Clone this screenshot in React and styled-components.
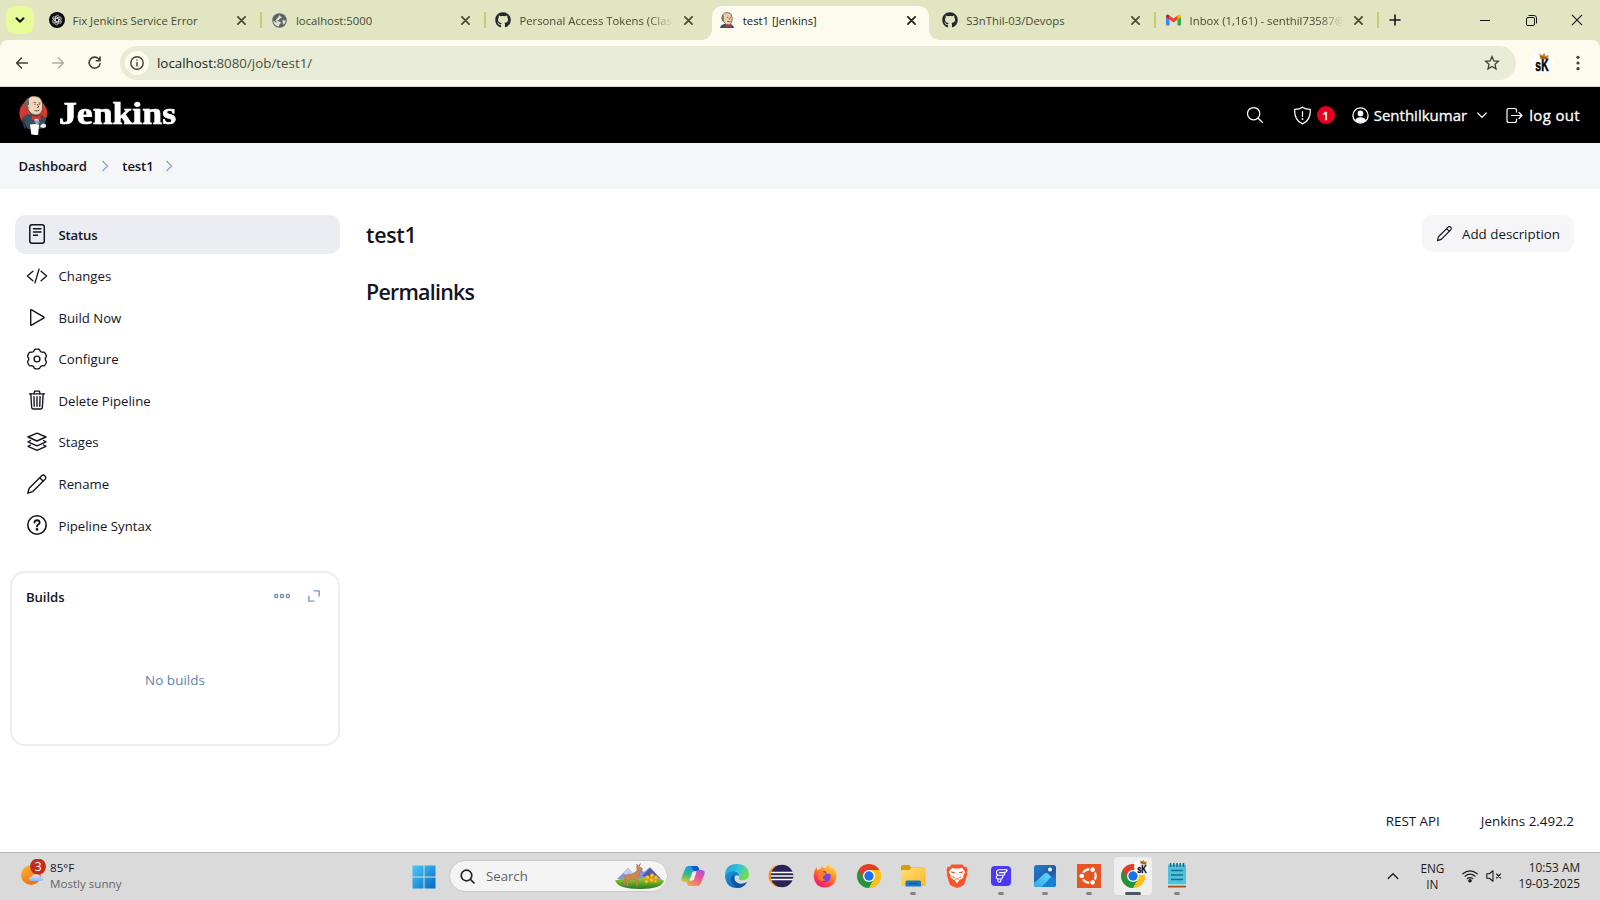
import React from "react";
import styled, { createGlobalStyle, css } from "styled-components";
import { FaGithub } from "react-icons/fa";
import { IoSearchOutline, IoCodeSlashOutline, IoTrashOutline } from "react-icons/io5";

const GlobalStyle = createGlobalStyle`
  *, *::before, *::after { box-sizing: border-box; }
  html, body { margin: 0; padding: 0; }
  body { overflow: hidden; background: #fff; }
  body, button { font-family: "Open Sans", "Noto Sans", sans-serif; }
  button { border: 0; padding: 0; background: none; color: inherit; }
  svg { display: block; flex: none; }
`;

/* ---------- layout ---------- */

const Screen = styled.div`
  width: 1600px;
  height: 900px;
  display: flex;
  flex-direction: column;
  color: #14141f;
  white-space: nowrap;
`;

/* ---------- browser chrome ---------- */

const TabStrip = styled.div`
  height: 40px;
  flex: none;
  display: flex;
  background: #e1e5c1;
  padding-left: 6px;
`;

const TabSearch = styled.button`
  width: 28px;
  height: 28px;
  margin: 6px 4px 0 0;
  border-radius: 9px;
  background: #e9fb99;
  display: grid;
  place-items: center;
`;

const Tab = styled.div`
  position: relative;
  width: 223.4px;
  height: 40px;
  display: flex;
  align-items: center;
  padding: 0 12px 0 10.6px;
  font-size: 11.3px;
  color: #474b33;

  ${(p) =>
    p.$divider &&
    css`
      &::after {
        content: "";
        position: absolute;
        right: -1px;
        top: 12px;
        width: 2px;
        height: 16px;
        background: #c0cf72;
      }
    `}

  ${(p) =>
    p.$active &&
    css`
      color: #1d1e14;
      &::before {
        content: "";
        position: absolute;
        z-index: 0;
        left: 4px;
        right: 3px;
        top: 6px;
        bottom: 0;
        border-radius: 10px 10px 0 0;
        background: #fcfbed;
      }
    `}
`;

const TabFoot = styled.i`
  position: absolute;
  bottom: 0;
  width: 10px;
  height: 10px;
  ${(p) =>
    p.$side === "left"
      ? css`
          left: -6px;
          background: radial-gradient(circle at 0 0, transparent 9.5px, #fcfbed 10px);
        `
      : css`
          right: -7px;
          background: radial-gradient(circle at 100% 0, transparent 9.5px, #fcfbed 10px);
        `}
`;

const TabIcon = styled.span`
  position: relative;
  width: 16px;
  height: 16px;
  margin-right: 8px;
  flex: none;
  display: grid;
  place-items: center;
`;

const TabTitle = styled.span`
  position: relative;
  width: 154px;
  flex: none;
  line-height: 18px;
  padding-top: 1px;
  ${(p) =>
    p.$fade &&
    css`
      -webkit-mask-image: linear-gradient(90deg, #000 84%, transparent);
      mask-image: linear-gradient(90deg, #000 84%, transparent);
    `}
`;

const TabClose = styled.button`
  position: relative;
  width: 16px;
  height: 16px;
  margin-left: 7.5px;
  display: grid;
  place-items: center;
`;

const NewTab = styled.button`
  width: 34px;
  height: 40px;
  display: grid;
  place-items: center;
`;

const WindowControls = styled.div`
  margin-left: auto;
  display: flex;
`;

const WindowButton = styled.button`
  width: 46px;
  height: 40px;
  display: grid;
  place-items: center;
`;

const ToolbarBack = styled.div`
  flex: none;
  background: #e1e5c1;
`;

const Toolbar = styled.div`
  height: 47px;
  display: flex;
  align-items: center;
  padding: 0 12px 1px 12px;
  background: #fcfbed;
  border-bottom: 1px solid #dcdccb;
  border-radius: 8px 8px 0 0;
`;

const NavButton = styled.button`
  width: 20px;
  height: 34px;
  margin-right: 16px;
  display: grid;
  place-items: center;
  color: ${(p) => (p.$disabled ? "#adae9c" : "#3e4130")};
`;

const AddressBar = styled.div`
  width: 1396px;
  height: 34px;
  flex: none;
  display: flex;
  align-items: center;
  padding: 0 16px 0 5px;
  border-radius: 17px;
  background: #e8ebd6;
  color: #3e4130;
`;

const SiteInfo = styled.span`
  width: 24px;
  height: 24px;
  border-radius: 50%;
  display: grid;
  place-items: center;
  background: #fcfbed;
`;

const Url = styled.span`
  flex: 1;
  margin-left: 8px;
  font-size: 13.35px;
  color: #4c4f3d;
  b {
    font-weight: 400;
    color: #1c1d14;
  }
`;

const Profile = styled.span`
  margin: 0 18px 0 15px;
`;

/* ---------- Jenkins page ---------- */

const Header = styled.header`
  height: 56px;
  flex: none;
  display: flex;
  align-items: center;
  padding: 0 20px 0 18px;
  background: #000;
  color: #fff;
`;

const Wordmark = styled.span`
  margin-left: 11px;
  height: 40px;
  line-height: 38px;
  font-family: "Liberation Serif", serif;
  font-weight: 700;
  font-size: 30.5px;
  -webkit-text-stroke: 0.7px #fff;
  transform: scaleX(1.17);
  transform-origin: 0 50%;
`;

const HeaderActions = styled.div`
  margin-left: auto;
  display: flex;
  align-items: center;
  height: 56px;
  font-size: 15px;
  -webkit-text-stroke: 0.3px #fff;
`;

const HeaderItem = styled.span`
  display: flex;
  align-items: center;
  gap: ${(p) => p.$gap || 5}px;
  margin-left: ${(p) => p.$left || 0}px;
  letter-spacing: ${(p) => p.$track || 0}px;
`;

const AlertCount = styled.span`
  width: 18px;
  height: 18px;
  border-radius: 50%;
  display: grid;
  place-items: center;
  background: #e6001f;
  font-size: 11px;
  font-weight: 600;
`;

const Breadcrumbs = styled.nav`
  height: 46px;
  flex: none;
  display: flex;
  align-items: center;
  padding: 0 18.5px;
  background: #f5f6f8;
  font-size: 13.1px;
  font-weight: 600;
  letter-spacing: -0.12px;
`;

const CrumbArrow = styled.span`
  margin: 0 13.5px 0 ${(p) => p.$left || 14}px;
`;

const Page = styled.main`
  height: 663px;
  flex: none;
  display: flex;
  padding: 26px 26px 0 10px;
`;

const Sidebar = styled.aside`
  width: 330px;
  flex: none;
  display: flex;
  flex-direction: column;
`;

const Tasks = styled.div`
  display: flex;
  flex-direction: column;
  gap: 2.6px;
  padding-left: 5px;
`;

const Task = styled.a`
  height: 39px;
  display: flex;
  align-items: center;
  gap: 10.5px;
  padding: 0 11px;
  border-radius: 10px;
  font-size: 13.2px;
  background: ${(p) => (p.$active ? "#ecedf3" : "transparent")};
  font-weight: ${(p) => (p.$active ? 600 : 400)};
  letter-spacing: ${(p) => (p.$active ? "-0.2px" : "0")};
`;

const TaskIcon = styled.span`
  margin-top: -1px;
`;

const BuildsCard = styled.section`
  height: 175px;
  margin-top: 25.8px;
  padding: 14px 18px 0 14px;
  border: 2px solid #ecedf4;
  border-radius: 15px;
`;

const BuildsHeader = styled.div`
  height: 20px;
  display: flex;
  align-items: center;
  font-size: 13.2px;
  font-weight: 600;
  letter-spacing: -0.1px;
  color: #14141f;
`;

const BuildsTools = styled.span`
  margin-left: auto;
  margin-top: -2px;
  display: flex;
  align-items: center;
  gap: 18px;
`;

const NoBuilds = styled.p`
  margin: 63px 0 0 4px;
  text-align: center;
  font-size: 13.5px;
  line-height: 20px;
  color: #6483a8;
`;

const Content = styled.section`
  flex: 1;
  display: flex;
  flex-direction: column;
  padding-left: 26px;
`;

const TitleRow = styled.div`
  display: flex;
  justify-content: space-between;
  height: 38px;
`;

const Heading = styled.h1`
  margin: ${(p) => p.$top || 0}px 0 0;
  font-size: 21.4px;
  line-height: 38px;
  font-weight: 600;
  letter-spacing: ${(p) => p.$track || 0}px;
`;

const DescriptionButton = styled.button`
  width: 152px;
  height: 37px;
  display: flex;
  align-items: center;
  gap: 9px;
  padding-left: 14px;
  border-radius: 10px;
  background: #f6f6f9;
  font-size: 13.35px;
`;

const Footer = styled.footer`
  margin-top: auto;
  display: flex;
  justify-content: flex-end;
  gap: 41px;
  padding-bottom: 21px;
  font-size: 13.4px;
  line-height: 20px;
`;

/* ---------- taskbar ---------- */

const Taskbar = styled.div`
  height: 48px;
  flex: none;
  display: flex;
  background: #dadada;
  border-top: 1px solid #b2b2b2;
  font-size: 11.6px;
`;

const Weather = styled.div`
  width: 392px;
  display: flex;
  padding: 6px 0 0 20px;
`;

const TwoLines = styled.div`
  line-height: 16px;
  padding-top: ${(p) => p.$top || 0}px;
  text-align: ${(p) => p.$align || "left"};
  span {
    display: block;
  }
  span + span {
    color: ${(p) => p.$second || "inherit"};
  }
`;

const Launcher = styled.div`
  display: flex;
  align-items: center;
  width: 785px;
  padding: 0 0 0 20px;
`;

const SearchBox = styled.div`
  width: 219px;
  height: 32px;
  flex: none;
  display: flex;
  align-items: center;
  margin: 0 3px 1px 13px;
  padding: 0 3px 0 10px;
  border-radius: 16px;
  border: 1px solid #c9c9c9;
  background: #f4f4f4;
  font-size: 13.2px;
  color: #606060;
`;

const SearchLabel = styled.span`
  flex: 1;
  margin-left: 11px;
`;

const SearchGlyph = styled.span`
  color: #222;
`;

const AppSlot = styled.span`
  position: relative;
  width: 44px;
  height: 47px;
  flex: none;
  display: grid;
  place-items: center;
  padding-bottom: 2px;

  &::before {
    content: "";
    position: absolute;
    inset: 3px;
    top: 4px;
    bottom: 5px;
    border-radius: 4px;
    background: ${(p) => (p.$active ? "#eeeeee" : "transparent")};
  }
  &::after {
    content: "";
    position: absolute;
    bottom: 5px;
    height: 3px;
    border-radius: 2px;
    width: ${(p) => (p.$active ? 16 : p.$open ? 6 : 0)}px;
    background: ${(p) => (p.$active ? "#4c585e" : "#858585")};
  }
  svg {
    position: relative;
  }
`;

const Tray = styled.div`
  flex: 1;
  display: flex;
  align-items: flex-start;
  justify-content: flex-end;
  padding-right: 20px;
  font-size: 11.8px;
  color: #1a1a1a;
`;

const TrayIcons = styled.span`
  height: 46px;
  display: flex;
  align-items: center;
  gap: 8px;
  margin: 0 ${(p) => p.$right || 16}px 0 18px;
`;

/* ---------- icons ---------- */

const Line = ({ size = 20, box = 24, w = 1.6, children }) => (
  <svg
    width={size}
    height={size}
    viewBox={`0 0 ${box} ${box}`}
    fill="none"
    stroke="currentColor"
    strokeWidth={w}
    strokeLinecap="round"
    strokeLinejoin="round"
  >
    {children}
  </svg>
);

const Cross = ({ size = 9, w = 1.9 }) => (
  <Line size={size} box={10} w={w}>
    <path d="M1 1l8 8M9 1l-8 8" />
  </Line>
);

const OpenAiIcon = () => (
  <svg width="16" height="16" viewBox="0 0 16 16">
    <circle cx="8" cy="8" r="8" fill="#0b0b0b" />
    <g fill="none" stroke="#e8e8e8" strokeWidth=".7">
      {[0, 60, 120, 180, 240, 300].map((a) => (
        <path key={a} transform={`rotate(${a} 8 8)`} d="M6.300 9V5.200a2 2 0 0 1 3.600-1.300M6.300 7l3.100-1.800 2.200 1.300" />
      ))}
    </g>
  </svg>
);

const GlobeIcon = () => (
  <svg width="15" height="15" viewBox="0 0 15 15">
    <circle cx="7.5" cy="7.5" r="7.3" fill="#5e636a" />
    <path
      d="M8.200 1.400c-.3 1.400-.2 2 .8 2.200 1 .2.700 1.500-.4 1.700-1.200.2-1 1.500-2.100 1.700-1.300.2-1.600.8-.4 1.200 1.300.4 2.600.4 2.700 1.500.1 1.300-1.400 1.100-1.500 2.300l-.2 1.600C3.500 13.200 1.300 10.700 1.300 7.500l3.200 2.200c.8-.5-.2-1.500-1-2.300M10.500 7.800c1-.8 2.200-.5 3.200-.4-.1 1.800-.9 3.300-2.100 4.400-.2-1.500-1.700-2.500-1.100-4z"
      fill="#e1e5c1"
    />
  </svg>
);

const GmailIcon = () => (
  <svg width="15" height="12" viewBox="0 0 30 24">
    <path d="M0 3v18q0 2 2 2h5V9z" fill="#4285f4" />
    <path d="M30 3v18q0 2-2 2h-5V9z" fill="#34a853" />
    <path d="M23 4v7l7-5V4q-.5-4-4.500-3z" fill="#fbbc04" />
    <path d="M7 11V3l8 6 8-6v8l-8 6z" fill="#ea4335" />
    <path d="M0 4v2l7 5V3L4 1Q.5 0 0 4z" fill="#c5221f" />
  </svg>
);

const ButlerHead = () => (
  <svg width="16" height="16" viewBox="0 0 16 16">
    <path d="M1 16q.3-3 4-4l6 0q3.500.8 4 4z" fill="#33506a" />
    <path d="M3.500 3Q5 .3 9 .6q4 .6 4.200 5.200.6 5-2.600 7-3 .8-5-1.700Q3 8 3.500 3z" fill="#edcdb0" stroke="#4c4540" strokeWidth=".7" />
    <path d="M4.300 2.300Q1.800 4 2.500 8l2 1.600Q5.500 7 4.300 2.300z" fill="#77706a" />
    <path d="M8 5.300h1.300M11 5.300h1M10 6l.8 1.700M8.300 9.500h3.200" stroke="#4c3c30" strokeWidth=".7" fill="none" />
    <path d="M6.500 12.200l3 1.300 3-1.300v3.300l-3-1-3 1z" fill="#d33833" />
  </svg>
);

const JenkinsLogo = () => (
  <svg width="30" height="42" viewBox="0 0 30 42">
    <circle cx="15.3" cy="19" r="13.9" fill="#d33833" />
    <path d="M0 29h30v13H0z" fill="#000" />
    <path d="M5 23q3-3 7-3l9 1q5 0 7 3.500l-1.500 7.500-4 3-12.500 0q-4-5-5-12z" fill="#334f63" />
    <path d="M5 23.500q3 3 3 11l-1.500 0Q3.500 28 5 23.500z" fill="#263c4d" />
    <path d="M9 7Q11 1.500 17.500 2.200q6.500.8 7 8 .7 7-2.800 9.800-4 2.200-7.900-.2Q7.500 15 9 7z" fill="#f0d6b7" stroke="#3b2f29" strokeWidth=".6" />
    <path d="M10.500 4Q5.500 6 6.500 12.500l3.500 3.500Q12 10 10.500 4z" fill="#6b625c" />
    <path d="M11 11q-1.500-1-1.500 1t2 2" fill="#f0d6b7" stroke="#6a5040" strokeWidth=".5" />
    <path d="M15.500 8.800q1.300-1 2.500 0M20.500 9h2M19.500 10l1.300 3-1.800.6M16.500 16.500q3 1.300 5-.5M16.500 10.500h1M21.300 10.500h.8" fill="none" stroke="#3b2f29" strokeWidth=".8" />
    <path d="M14 22l8 2-3 6.500z" fill="#fff" />
    <path d="M13.500 21l4.500 2 5-2.500v5.800l-5-1.800-4.500 2.200z" fill="#e0362f" stroke="#7d1c1c" strokeWidth=".4" />
    <path d="M16 26.500l4-.5 2 3-4 1z" fill="#8ba5b7" />
    <path d="M12 30.500q5-1 9 0l-.8 10.200q-4 .6-7-.5z" fill="#fff" />
    <path d="M22.500 31l2.500-1.800 3 1v3l-3 1-3-1.200z" fill="#f4f0ee" stroke="#4d4d4d" strokeWidth=".4" />
  </svg>
);

const ShieldIcon = () => (
  <Line size={19} box={20} w={1.3}>
    <path d="M10 1.300C7.600 3 4.500 3.600 1.700 3.600 1.500 10.500 3 15.800 10 18.800c7-3 8.500-8.300 8.300-15.200C15.500 3.600 12.400 3 10 1.300zM10 6v5" />
    <circle cx="10" cy="13.8" r=".4" />
  </Line>
);

const PersonIcon = () => (
  <svg width="17" height="17" viewBox="0 0 17 17">
    <circle cx="8.5" cy="8.5" r="7.6" fill="none" stroke="#fff" strokeWidth="1.3" />
    <circle cx="8.5" cy="6.5" r="2.9" fill="#fff" />
    <path d="M3 13.200Q4.500 10.300 8.500 10.300t5.500 2.900Q12 15.800 8.500 15.800T3 13.200z" fill="#fff" />
  </svg>
);

const LogoutIcon = () => (
  <Line size={17} box={17} w={1.2}>
    <path d="M10.500 5V3.500Q10.500 1.500 8.500 1.500h-5.500Q1 1.500 1 3.500v10q0 2 2 2h5.500q2 0 2-2V12M5.500 8.500H16M13 5.500l3 3-3 3" />
  </Line>
);

const StatusIcon = () => (
  <Line size={22} box={22} w={1.5}>
    <rect x="3.8" y="1.8" width="14.5" height="18.5" rx="2.2" />
    <path d="M7.500 5.800h7.500M7.500 9h7.500M7.500 12.200h4" />
  </Line>
);

const PlayIcon = () => (
  <Line size={22} box={22} w={1.4}>
    <path d="M4.700 4.300v14.400q0 1 .9.500l12-7q.9-.7 0-1.300L5.600 3.800q-.9-.4-.9.500z" />
  </Line>
);

const gear = (() => {
  const points = [];
  for (let i = 0; i <= 120; i += 1) {
    const t = (i / 120) * Math.PI * 2;
    const a = t - Math.PI / 2;
    const r = 9.05 + 0.85 * Math.tanh(2.2 * Math.cos(6 * t) + 0.9);
    points.push(`${(11 + r * Math.cos(a)).toFixed(2)} ${(11 + r * Math.sin(a)).toFixed(2)}`);
  }
  return `M${points.join("L")}Z`;
})();

const GearIcon = () => (
  <Line size={22} box={22} w={1.4}>
    <path d={gear} />
    <circle cx="11" cy="11" r="2.9" />
  </Line>
);

const LayersIcon = () => (
  <Line size={22} box={22} w={1.4}>
    <path d="M11 2.200L2 6l9 4 9-4zM4.500 9.500L2 10.800l9 4 9-4-2.500-1.300M4.500 14L2 15.300l9 4 9-4-2.500-1.300" />
  </Line>
);

const PencilIcon = ({ size = 22, w = 1.4 }) => (
  <Line size={size} box={22} w={w}>
    <path d="M1.800 20.200l1.400-5L16 2.400q1.500-1 3 .5t.4 3L6.800 18.600zM13.800 4.800l3.400 3.400" />
  </Line>
);

const HelpIcon = () => (
  <Line size={22} box={22} w={1.6}>
    <circle cx="11" cy="11" r="9.2" />
    <path d="M8.500 8.500q.3-2.300 2.600-2.300t2.500 2.200q0 1.400-1.400 2.100-1.200.6-1.200 1.900" strokeWidth="1.9" />
    <circle cx="11" cy="15.4" r=".6" fill="currentColor" />
  </Line>
);

const DotsIcon = () => (
  <svg width="16" height="6" viewBox="0 0 16 6" fill="none" stroke="#6483a8" strokeWidth="1.2">
    <circle cx="2.2" cy="3" r="1.6" />
    <circle cx="8" cy="3" r="1.6" />
    <circle cx="13.8" cy="3" r="1.6" />
  </svg>
);

const ExpandIcon = () => (
  <svg width="12" height="12" viewBox="0 0 12 12" fill="none" stroke="#7c97b8" strokeWidth="1.4">
    <path d="M5.500.9h5.600v5.600M.9 5.800v5.300h5.600" />
  </svg>
);

const SkBadge = ({ size = 24 }) => (
  <svg width={size} height={size} viewBox="0 0 24 24" overflow="visible">
    <circle cx="12" cy="12" r="12" fill="#fff" />
    <path d="M9 1.500l3 2L14.500 1l1.500 3 3.500-.5-1.500 5-8-1z" fill="#c98a2c" />
    <path d="M10.500 5l7 2" stroke="#5c3512" strokeWidth="1" />
    <text
      x="12"
      y="21"
      textAnchor="middle"
      fontFamily="Liberation Sans, sans-serif"
      fontWeight="700"
      fontSize="17"
      textLength="14.5"
      lengthAdjust="spacingAndGlyphs"
      fill="#000"
      stroke="#000"
      strokeWidth=".5"
    >
      sK
    </text>
  </svg>
);

const WeatherIcon = () => (
  <svg width="30" height="30" viewBox="0 0 30 30">
    <defs>
      <linearGradient id="sun" x1="0" y1="0" x2=".6" y2="1">
        <stop stopColor="#f7bd31" />
        <stop offset="1" stopColor="#f26a14" />
      </linearGradient>
      <linearGradient id="cloud" x1="0" y1="0" x2="0" y2="1">
        <stop stopColor="#e1edff" />
        <stop offset="1" stopColor="#8fb4ef" />
      </linearGradient>
    </defs>
    <circle cx="11" cy="16" r="10" fill="url(#sun)" />
    <path d="M11 22q-2-.4-2-2.200 0-2 2.500-2 1.500-3 5-2.800 3 .3 3.500 2.800 3 0 3 2.200 0 2-2.500 2z" fill="url(#cloud)" />
    <circle cx="18" cy="7.5" r="8" fill="#c42b1c" />
    <text x="18.3" y="11.5" textAnchor="middle" fontFamily="Open Sans, sans-serif" fontSize="12" fill="#fff">
      3
    </text>
  </svg>
);

const WindowsIcon = () => (
  <svg width="24" height="24" viewBox="0 0 24 24">
    <defs>
      <linearGradient id="win" gradientUnits="userSpaceOnUse" x1="0" y1="0" x2="24" y2="24">
        <stop stopColor="#4fcbfb" />
        <stop offset="1" stopColor="#0067c4" />
      </linearGradient>
    </defs>
    <path d="M.5.500h11v11H.5zM12.500.500h11v11h-11zM.5 12.500h11v11H.5zM12.500 12.500h11v11h-11z" fill="url(#win)" />
  </svg>
);

const MeadowIcon = () => (
  <svg width="49" height="26" viewBox="0 0 49 26" overflow="visible">
    <defs>
      <linearGradient id="hill" x1="0" y1="0" x2="0" y2="1">
        <stop stopColor="#9bd02f" />
        <stop offset="1" stopColor="#257b1d" />
      </linearGradient>
    </defs>
    <path d="M2 16L13 5l5 5 8-4 3 3 6-5 12 13z" fill="#8494d6" />
    <path d="M8 10l5-5 5 5-4 4z" fill="#c3cbee" />
    <path d="M27 13l8-8 10 10z" fill="#4c5cae" />
    <path d="M0 17.500q12-4 24-2 12-2 25 2-2 8.500-24 8.500T0 17.500z" fill="url(#hill)" />
    <path d="M22.500 3l-.8-2M24.300 3l1-2.500" fill="none" stroke="#8a5630" strokeWidth=".9" />
    <path d="M10 12.500q3-1.800 9-1.300l3-4.200-.5-3.500 2-1 1.200 1.200 2.800 1.800-.3 1.200-2.300.5-.7 6-2 2.500.5 7.300h-1.400l-1.100-6.500-5.500-.2L13 23h-1.300l.5-6q-1-.5-1.200-1.500L10 22H8.800l.5-6.500z" fill="#cd8753" stroke="#a8673a" strokeWidth=".4" />
    <g fill="#f7c325" stroke="#d58b16" strokeWidth=".6">
      <circle cx="32.5" cy="14.5" r="2" />
      <circle cx="37" cy="12.5" r="2" />
      <circle cx="36.5" cy="17" r="2.2" />
      <circle cx="41" cy="14.5" r="2" />
      <circle cx="31.5" cy="18.5" r="1.8" />
      <circle cx="40.5" cy="18.3" r="1.5" />
    </g>
  </svg>
);

const CopilotIcon = () => (
  <svg width="24" height="22" viewBox="0 0 24 22">
    <defs>
      <linearGradient id="cpa" x1=".2" y1="0" x2="0" y2="1">
        <stop stopColor="#149ee2" />
        <stop offset=".5" stopColor="#38b982" />
        <stop offset="1" stopColor="#f4c817" />
      </linearGradient>
      <linearGradient id="cpb" x1="1" y1="0" x2=".3" y2="1">
        <stop stopColor="#a44df0" />
        <stop offset=".5" stopColor="#ef5492" />
        <stop offset="1" stopColor="#f6a04c" />
      </linearGradient>
    </defs>
    <path d="M8 1h7q2 0 2.700 2l1 3h-5q-2 0-2.700 2l-2 7Q8 17 6 17H4q-4.500 0-3.500-4L4 4Q5 1 8 1z" fill="url(#cpa)" />
    <path d="M9 1h6q2 0 2.700 2l1 3h-4q-3 0-3-2Q11 1 9 1z" fill="#1656c8" />
    <path d="M16 21H9q-2 0-2.700-2l-1-3h5q2 0 2.700-2l2-7q1-2 3-2h2q4.500 0 3.500 4l-3.500 9q-1 3-4 3z" fill="url(#cpb)" />
    <path d="M11.500 7.500h3.800l-2.800 7.500H8.500z" fill="#eee" />
  </svg>
);

const EdgeIcon = () => (
  <svg width="24" height="24" viewBox="0 0 24 24">
    <defs>
      <linearGradient id="edgeTop" x1="0" y1="0" x2="1" y2=".4">
        <stop stopColor="#209ddc" />
        <stop offset=".55" stopColor="#2fc2df" />
        <stop offset="1" stopColor="#70df4f" />
      </linearGradient>
      <linearGradient id="edgeLow" x1="0" y1="0" x2="1" y2="1">
        <stop stopColor="#1b9bde" />
        <stop offset="1" stopColor="#0c4fa0" />
      </linearGradient>
    </defs>
    <path d="M0 12Q0 0 12 0q11.500.5 12 10 0 6-6 6.300-5 .2-4-3 1.500-4.500-3-6-6-1-11 4.700z" fill="url(#edgeTop)" />
    <path d="M0 12Q3 6.500 9 7q5.500 1 5 5-3-2-4.500 1.500Q9 20 16 20.500q3 .2 6-2.500-3 6-10 6Q1 24 0 12z" fill="url(#edgeLow)" />
    <path d="M8.500 10Q4 15 8 20q3 4 8 3.300 4-1.300 6-5.300-4 2.500-8 1.500-6-2-5.500-9.500z" fill="#10539f" />
  </svg>
);

const EclipseIcon = () => (
  <svg width="26" height="24" viewBox="0 0 26 24">
    <circle cx="11.5" cy="12" r="11" fill="#f7941e" />
    <circle cx="14" cy="12" r="11.3" fill="#2c2255" />
    <path d="M3 8.500h22M2.700 12h22.600M3 15.500h22" stroke="#fff" strokeWidth="1.5" />
  </svg>
);

const FirefoxIcon = () => (
  <svg width="24" height="24" viewBox="0 0 24 24">
    <defs>
      <linearGradient id="ffx" x1=".9" y1="0" x2=".3" y2="1">
        <stop stopColor="#fff04a" />
        <stop offset=".45" stopColor="#ff8a24" />
        <stop offset=".8" stopColor="#ff3650" />
        <stop offset="1" stopColor="#e7158c" />
      </linearGradient>
    </defs>
    <path d="M.7 12.500Q.5 7 3.500 3l.8 3 4-1.500L7.500 2l5 2.800Q13 1.500 16 0l2 4.500 3-1q3.300 5.500 2.300 11Q21.500 23 12 23.500 1.500 23 .7 12.500z" fill="url(#ffx)" />
    <circle cx="12" cy="12.5" r="5.7" fill="#7845dc" />
    <path d="M5 8q4-2 6.500.5l2 1.500-3 2q-2 3 2 4-4 2.500-7-1z" fill="#ff7a2b" />
    <path d="M12 6q4 0 6 4-2-1-4 0z" fill="#ffb52b" />
  </svg>
);

const ChromeIcon = () => (
  <svg width="24" height="24" viewBox="0 0 24 24">
    <circle cx="12" cy="12" r="12" fill="#fbc116" />
    <path d="M12 12L1.610 6A12 12 0 0 0 12 24l5.200-9z" fill="#229342" />
    <path d="M1.610 6A12 12 0 0 1 22.390 6H12l-5.200 9z" fill="#e33b2e" />
    <path d="M12 6h10.400A12 12 0 0 1 12 24l5.200-9z" fill="#fbc116" />
    <circle cx="12" cy="12" r="6" fill="#fff" />
    <circle cx="12" cy="12" r="4.7" fill="#1a73e8" />
  </svg>
);

const FolderIcon = () => (
  <svg width="25" height="24" viewBox="0 0 25 24">
    <defs>
      <linearGradient id="folder" x1="0" y1="0" x2="1" y2="1">
        <stop stopColor="#ffe07a" />
        <stop offset="1" stopColor="#fbb81f" />
      </linearGradient>
    </defs>
    <path d="M0 3q0-2 2-2h6l2.500 2.500H22v5H0z" fill="#d99a08" />
    <path d="M0 7.500q0-1.500 1.500-1.500H8l2.500-2.500H23q1.500 0 1.500 1.500v17H0z" fill="url(#folder)" />
    <path d="M4.500 22.500V18q0-1.500 1.500-1.500h12.500q1.500 0 1.500 1.500v4.500z" fill="#1877c9" />
    <path d="M8 19.500h8.500" stroke="#0d5797" strokeWidth="1.3" />
  </svg>
);

const BraveIcon = () => (
  <svg width="22" height="24" viewBox="0 0 22 24">
    <path d="M5.500.500h11L18.500 3l2-.3L21.500 6l-.7 2 .5 2-2.500 9q-.7 2-2.500 3L11 24l-5.300-2q-1.800-1-2.500-3L.7 10l.5-2L.5 6l1-3.300 2 .3z" fill="#fb542b" />
    <path d="M6 3.800l2.500.7h5L16 3.800l3.200 4.200-2 3.500.3 2-4.200 2.800-2.300 3.200-2.300-3.200-4.200-2.800.3-2L2.800 8z" fill="#fff" />
    <path d="M4.800 7.300l4.400.9-.9 1.300-3-.8zM17.200 7.300l-4.400.9.9 1.300 3-.8zM5.500 11.500l3.500 2-.7.9zM16.500 11.500l-3.500 2 .7.9z" fill="#fb542b" />
    <path d="M9 15.500l2-1.200 2 1.200" fill="none" stroke="#fb542b" strokeWidth=".9" />
  </svg>
);

const FigIcon = () => (
  <svg width="20" height="20" viewBox="0 0 20 20">
    <rect width="20" height="20" rx="4" fill="#4b3af5" />
    <g fill="none" stroke="#fff" strokeWidth="1.1" strokeLinejoin="round">
      <path d="M8 3.800h8q-.3 2.800-3 2.800H8" />
      <path d="M8 3.800Q5.500 4 5.500 6.500T7.500 9.300h5Q14 8.800 14 6.600" />
      <path d="M7.500 9.300q-2.300.2-2.200 2 .2 1.700 2.200 1.700h2.500q2-.5 2-3.700M7 13q-.8 3.200 1.300 3.200 1.700 0 1.700-3.200" />
    </g>
  </svg>
);

const PhotosIcon = () => (
  <svg width="22" height="22" viewBox="0 0 22 22">
    <defs>
      <linearGradient id="photo" x1="0" y1="0" x2="1" y2="1">
        <stop stopColor="#1c7fd2" />
        <stop offset=".6" stopColor="#2758a6" />
        <stop offset="1" stopColor="#2c92df" />
      </linearGradient>
      <linearGradient id="ridge" x1="1" y1="0" x2="0" y2="1">
        <stop stopColor="#63dcf8" />
        <stop offset="1" stopColor="#2ba9e6" />
      </linearGradient>
      <clipPath id="photoClip">
        <rect width="22" height="22" rx="2.5" />
      </clipPath>
    </defs>
    <g clipPath="url(#photoClip)">
      <rect width="22" height="22" fill="url(#photo)" />
      <path d="M12 8.500q1.500-1 3 .5L22 16v6H5z" fill="#1880d6" />
      <path d="M0 18L10.300 8.700q2-1.500 3.700 0L17 12 7.500 22H0z" fill="url(#ridge)" />
    </g>
    <circle cx="16" cy="4.5" r="2" fill="#f3faff" />
  </svg>
);

const UbuntuIcon = () => (
  <svg width="24" height="24" viewBox="0 0 24 24">
    <rect width="24" height="24" fill="#e95420" />
    <circle cx="12" cy="12" r="6.7" fill="none" stroke="#fff" strokeWidth="2.3" />
    {[60, 180, 300].map((a) => (
      <g key={a} transform={`rotate(${a} 12 12)`}>
        <circle cx="19" cy="12" r="3.4" fill="#e95420" />
        <circle cx="19.3" cy="12" r="2.3" fill="#fff" />
      </g>
    ))}
  </svg>
);

const ActiveChrome = styled.span`
  position: relative;
  > svg + svg {
    position: absolute;
    right: -5px;
    top: -5px;
  }
`;

const NotepadIcon = () => (
  <svg width="18" height="25" viewBox="0 0 18 25">
    <path d="M0 21h18v3.500H0z" fill="#a6531c" />
    <path d="M0 21h18v1.500H0z" fill="#fff" />
    <rect y="1.5" width="18" height="20" rx="1" fill="#4cc2dd" />
    <path d="M2.500 0v4M5.800 0v4M9 0v4M12.200 0v4M15.500 0v4" stroke="#12657e" strokeWidth="1.4" />
    <path d="M3 7.500h12M3 12h12M3 16.500h12" stroke="#16718b" strokeWidth="1.5" />
  </svg>
);

const WifiIcon = () => (
  <Line size={16} box={16} w={1.2}>
    <path d="M.8 5.800Q8-.2 15.200 5.800M3 8.200q5-4 10 0M5.300 10.600q2.700-2 5.400 0" />
    <circle cx="8" cy="12.8" r="1.2" fill="currentColor" />
  </Line>
);

const MuteIcon = () => (
  <Line size={16} box={16} w={1.1}>
    <path d="M.8 5.800h2.500L7 2.800v10.500l-3.700-3H.8zM10.500 6l4 4M14.500 6l-4 4" />
  </Line>
);

const tabs = [
  { title: "Fix Jenkins Service Error", icon: <OpenAiIcon />, divider: true },
  { title: "localhost:5000", icon: <GlobeIcon />, divider: true },
  { title: "Personal Access Tokens (Clas", icon: <FaGithub size={16} color="#24292f" />, fade: true },
  { title: "test1 [Jenkins]", icon: <ButlerHead />, active: true },
  { title: "S3nThil-03/Devops", icon: <FaGithub size={16} color="#24292f" />, divider: true },
  { title: "Inbox (1,161) - senthil73587@", icon: <GmailIcon />, fade: true, divider: true },
];

const tasks = [
  { label: "Status", icon: <StatusIcon />, active: true },
  { label: "Changes", icon: <IoCodeSlashOutline size={22} /> },
  { label: "Build Now", icon: <PlayIcon /> },
  { label: "Configure", icon: <GearIcon /> },
  { label: "Delete Pipeline", icon: <IoTrashOutline size={22} /> },
  { label: "Stages", icon: <LayersIcon /> },
  { label: "Rename", icon: <PencilIcon /> },
  { label: "Pipeline Syntax", icon: <HelpIcon /> },
];

const apps = [
  { icon: <CopilotIcon /> },
  { icon: <EdgeIcon /> },
  { icon: <EclipseIcon /> },
  { icon: <FirefoxIcon /> },
  { icon: <ChromeIcon /> },
  { icon: <FolderIcon />, open: true },
  { icon: <BraveIcon /> },
  { icon: <FigIcon />, open: true },
  { icon: <PhotosIcon />, open: true },
  { icon: <UbuntuIcon />, open: true },
  {
    icon: (
      <ActiveChrome>
        <ChromeIcon />
        <SkBadge size={16} />
      </ActiveChrome>
    ),
    active: true,
  },
  { icon: <NotepadIcon />, open: true },
];

const Chevron = () => (
  <svg width="8" height="12" viewBox="0 0 8 12" fill="none" stroke="#92aac8" strokeWidth="1.5">
    <path d="M1.500 1l5 5-5 5" />
  </svg>
);

export default function App() {
  return (
    <Screen>
      <GlobalStyle />
      <TabStrip>
        <TabSearch>
          <Line size={10} box={10} w={2}>
            <path d="M1.500 3.300L5 6.800l3.500-3.500" />
          </Line>
        </TabSearch>
        {tabs.map((t) => (
          <Tab key={t.title} $active={t.active} $divider={t.divider}>
            {t.active && <TabFoot $side="left" />}
            {t.active && <TabFoot $side="right" />}
            <TabIcon>{t.icon}</TabIcon>
            <TabTitle $fade={t.fade}>{t.title}</TabTitle>
            <TabClose>
              <Cross />
            </TabClose>
          </Tab>
        ))}
        <NewTab>
          <Line size={12} box={12} w={1.6}>
            <path d="M6 1v10M1 6h10" />
          </Line>
        </NewTab>
        <WindowControls>
          <WindowButton>
            <Line size={10} box={10} w={1}>
              <path d="M0 5.500h10" />
            </Line>
          </WindowButton>
          <WindowButton>
            <Line size={11} box={11} w={1}>
              <rect x=".5" y="2.5" width="8" height="8" rx="1.5" />
              <path d="M3 .5h5q2.500 0 2.500 2.500v5" />
            </Line>
          </WindowButton>
          <WindowButton>
            <Cross size={12} w={0.9} />
          </WindowButton>
        </WindowControls>
      </TabStrip>
      <ToolbarBack>
        <Toolbar>
          <NavButton>
            <Line size={12} box={12} w={1.5}>
              <path d="M11.500 6H.8M5.500 1L.6 6l4.900 5" />
            </Line>
          </NavButton>
          <NavButton $disabled>
            <Line size={12} box={12} w={1.5}>
              <path d="M.5 6h10.700M6.500 1l4.900 5-4.900 5" />
            </Line>
          </NavButton>
          <NavButton>
            <Line size={13} box={13} w={1.6}>
              <path d="M11.200 3.600A5.500 5.500 0 1 0 12 7.800M12 1v3.700H8.300" />
            </Line>
          </NavButton>
          <AddressBar>
            <SiteInfo>
              <Line size={14} box={14} w={1.4}>
                <circle cx="7" cy="7" r="6.2" />
                <path d="M7 6.500v3.500M7 4v.1" />
              </Line>
            </SiteInfo>
            <Url>
              <b>localhost:</b>8080/job/test1/
            </Url>
            <Line size={16} box={16} w={1.3}>
              <path strokeLinejoin="miter" d="M8 1.600l1.800 4.300 4.700.4-3.500 3 1 4.600-4-2.400-4 2.400 1-4.600-3.500-3 4.700-.4z" />
            </Line>
          </AddressBar>
          <Profile>
            <SkBadge size={22} />
          </Profile>
          <svg width="14" height="16" viewBox="0 0 14 16" fill="#3e4130">
            <circle cx="7" cy="2.3" r="1.6" />
            <circle cx="7" cy="8" r="1.6" />
            <circle cx="7" cy="13.7" r="1.6" />
          </svg>
        </Toolbar>
      </ToolbarBack>

      <Header>
        <JenkinsLogo />
        <Wordmark>Jenkins</Wordmark>
        <HeaderActions>
          <HeaderItem>
            <IoSearchOutline size={20} />
          </HeaderItem>
          <HeaderItem $left={28}>
            <ShieldIcon />
            <AlertCount>1</AlertCount>
          </HeaderItem>
          <HeaderItem $left={17}>
            <PersonIcon />
            Senthilkumar
            <HeaderItem $left={5}>
              <Line size={10} box={10} w={1.2}>
                <path d="M.8 3L5 7.300 9.200 3" />
              </Line>
            </HeaderItem>
          </HeaderItem>
          <HeaderItem $left={19} $gap={6} $track={0.35}>
            <LogoutIcon />
            log out
          </HeaderItem>
        </HeaderActions>
      </Header>

      <Breadcrumbs>
        Dashboard
        <CrumbArrow>
          <Chevron />
        </CrumbArrow>
        test1
        <CrumbArrow $left={11.5}>
          <Chevron />
        </CrumbArrow>
      </Breadcrumbs>

      <Page>
        <Sidebar>
          <Tasks>
            {tasks.map((t) => (
              <Task key={t.label} $active={t.active}>
                <TaskIcon>{t.icon}</TaskIcon>
                {t.label}
              </Task>
            ))}
          </Tasks>
          <BuildsCard>
            <BuildsHeader>
              Builds
              <BuildsTools>
                <DotsIcon />
                <ExpandIcon />
              </BuildsTools>
            </BuildsHeader>
            <NoBuilds>No builds</NoBuilds>
          </BuildsCard>
        </Sidebar>
        <Content>
          <TitleRow>
            <Heading $top={1} $track={-0.3}>
              test1
            </Heading>
            <DescriptionButton>
              <PencilIcon size={17} w={1.5} />
              Add description
            </DescriptionButton>
          </TitleRow>
          <Heading as="h2" $top={20} $track={-0.75}>
            Permalinks
          </Heading>
          <Footer>
            <span>REST API</span>
            <span>Jenkins 2.492.2</span>
          </Footer>
        </Content>
      </Page>

      <Taskbar>
        <Weather>
          <WeatherIcon />
          <TwoLines $top={1} $second="#666">
            <span>85°F</span>
            <span>Mostly sunny</span>
          </TwoLines>
        </Weather>
        <Launcher>
          <WindowsIcon />
          <SearchBox>
            <SearchGlyph>
              <Line size={15} box={15} w={1.7}>
                <circle cx="6.5" cy="6.5" r="5.3" />
                <path d="M10.500 10.500l3.500 3.500" />
              </Line>
            </SearchGlyph>
            <SearchLabel>Search</SearchLabel>
            <MeadowIcon />
          </SearchBox>
          {apps.map((a, i) => (
            <AppSlot key={i} $active={a.active} $open={a.open}>
              {a.icon}
            </AppSlot>
          ))}
        </Launcher>
        <Tray>
          <TrayIcons $right={21}>
            <Line size={12} box={12} w={1.3}>
              <path d="M1.200 8.500L6 3.800l4.800 4.700" />
            </Line>
          </TrayIcons>
          <TwoLines $top={7} $align="center">
            <span>ENG</span>
            <span>IN</span>
          </TwoLines>
          <TrayIcons>
            <WifiIcon />
            <MuteIcon />
          </TrayIcons>
          <TwoLines $top={6} $align="right">
            <span>10:53 AM</span>
            <span>19-03-2025</span>
          </TwoLines>
        </Tray>
      </Taskbar>
    </Screen>
  );
}
